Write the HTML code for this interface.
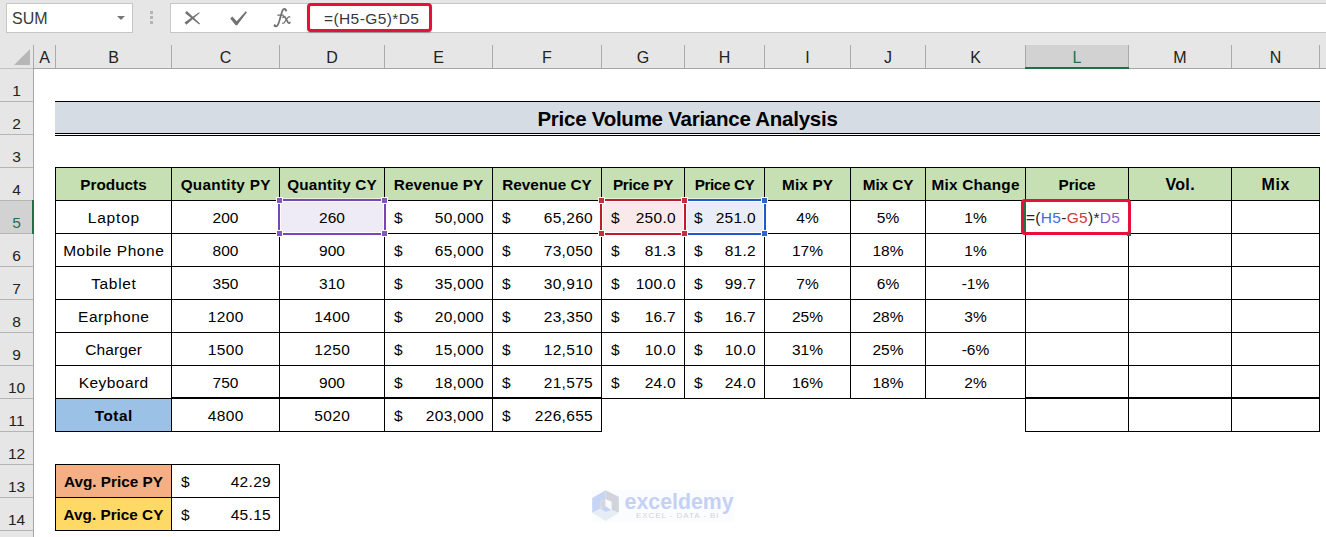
<!DOCTYPE html>
<html><head><meta charset="utf-8"><title>Excel</title>
<style>
html,body{margin:0;padding:0;}
body{width:1326px;height:537px;overflow:hidden;background:#fff;position:relative;font-family:"Liberation Sans",sans-serif;color:#000;}
.abs{position:absolute;}
.top{left:0;top:0;width:1326px;height:69px;background:#e6e6e6;}
.box{position:absolute;background:#fff;border:1px solid #c6c6c6;box-sizing:border-box;}
.ch{position:absolute;top:47px;height:21px;line-height:21px;text-align:center;font-size:16px;color:#222;}
.rh{position:absolute;left:0;width:33px;text-align:center;font-size:15.5px;color:#222;height:33px;line-height:33px;}
.vl{position:absolute;width:1px;background:#000;}
.hl{position:absolute;height:1px;background:#000;}
.c{position:absolute;height:33px;line-height:33px;font-size:15.5px;white-space:nowrap;text-align:center;}
.b{font-weight:bold;font-size:15.3px;letter-spacing:0.2px;}
.t{letter-spacing:0.35px;}
.r{text-align:right;letter-spacing:0.3px;}
.l{text-align:left;}
</style></head><body>

<div class="abs top"></div>
<div class="box" style="left:6px;top:3px;width:127px;height:30px;"></div>
<div class="abs" style="left:12px;top:3px;height:31px;line-height:31px;font-size:16px;color:#3a3a3a;">SUM</div>
<div class="abs" style="left:116.5px;top:16px;width:0;height:0;border-left:4px solid transparent;border-right:4px solid transparent;border-top:4px solid #777;"></div>
<div class="abs" style="left:150px;top:11px;width:3px;height:3px;background:#b4b4b4;"></div>
<div class="abs" style="left:150px;top:16px;width:3px;height:3px;background:#b4b4b4;"></div>
<div class="abs" style="left:150px;top:21px;width:3px;height:3px;background:#b4b4b4;"></div>
<div class="box" style="left:170px;top:3px;width:138px;height:30px;"></div>
<div class="box" style="left:307px;top:3px;width:1030px;height:30px;border-left:none;"></div>
<svg class="abs" style="left:170px;top:0px;" width="137" height="34" viewBox="170 0 137 34">
<polygon points="184.98,13.05 186.82,10.95 200.0,23.55 199.2,24.45" fill="#727272"/>
<polygon points="186.32,24.78 184.48,22.42 199.09,12.31 199.71,13.09" fill="#727272"/>
<polygon points="230.2,18.5 232.3,16.5 236.7,21.2 245.7,11.2 247.0,12.2 237.1,25.2 235.7,25.2" fill="#727272"/>
</svg>
<svg class="abs" style="left:270px;top:4px;" width="26" height="28" viewBox="270 4 26 28" fill="none" stroke="#6e6e6e" stroke-linecap="round" stroke-linejoin="round">
<path d="M286.0 10.5 C285.8 9.2 285 8.8 284.4 8.9 C283.3 9.1 282.7 9.9 282.3 11.1 L280.8 15.8 L279.2 21.4 C278.8 23 278.4 24.4 277.6 25.2 C277 26.1 276.3 26.5 275.7 26.4 C275 26.3 274.6 25.9 274.6 25.4" stroke-width="1.7"/>
<circle cx="285.9" cy="10.4" r="0.6" stroke-width="1"/>
<circle cx="274.8" cy="25.3" r="0.6" stroke-width="1"/>
<path d="M277.9 15.2 L283.4 15.2" stroke-width="1.2"/>
<path d="M283.0 17.4 C283.5 16.4 284.5 16.2 285.0 17.1 L288.0 22.5 C288.5 23.5 289.5 23.4 290.0 22.4" stroke-width="1.6"/>
<path d="M289.9 17.1 C289.3 16.4 288.6 16.6 288 17.4 L284.4 22.4 C283.8 23.2 283.2 23.5 282.6 23.0" stroke-width="1.1"/>
</svg>
<div class="abs" style="left:307px;top:2.5px;width:125px;height:29.5px;box-sizing:border-box;border:3px solid #e6103c;border-radius:4px;background:#fff;box-shadow:0 1px 1px rgba(0,0,0,0.25);"></div>
<div class="abs" style="left:324px;top:4px;height:30px;line-height:30px;font-size:15.5px;color:#383838;letter-spacing:0.4px;">=(H5-G5)*D5</div>
<div class="abs" style="left:1025px;top:45px;width:104px;height:23px;background:#d2d2d2;"></div>
<div class="ch" style="left:34px;width:21px;color:#222;">A</div>
<div class="ch" style="left:56px;width:115px;color:#222;">B</div>
<div class="ch" style="left:172px;width:107px;color:#222;">C</div>
<div class="ch" style="left:280px;width:104px;color:#222;">D</div>
<div class="ch" style="left:385px;width:107px;color:#222;">E</div>
<div class="ch" style="left:493px;width:108px;color:#222;">F</div>
<div class="ch" style="left:602px;width:82px;color:#222;">G</div>
<div class="ch" style="left:685px;width:79px;color:#222;">H</div>
<div class="ch" style="left:765px;width:85px;color:#222;">I</div>
<div class="ch" style="left:851px;width:74px;color:#222;">J</div>
<div class="ch" style="left:926px;width:99px;color:#222;">K</div>
<div class="ch" style="left:1026px;width:102px;color:#217346;">L</div>
<div class="ch" style="left:1129px;width:102px;color:#222;">M</div>
<div class="ch" style="left:1232px;width:87px;color:#222;">N</div>
<div class="vl" style="left:33px;top:45px;height:23px;background:#ababab;"></div>
<div class="vl" style="left:55px;top:45px;height:23px;background:#ababab;"></div>
<div class="vl" style="left:171px;top:45px;height:23px;background:#ababab;"></div>
<div class="vl" style="left:279px;top:45px;height:23px;background:#ababab;"></div>
<div class="vl" style="left:384px;top:45px;height:23px;background:#ababab;"></div>
<div class="vl" style="left:492px;top:45px;height:23px;background:#ababab;"></div>
<div class="vl" style="left:601px;top:45px;height:23px;background:#ababab;"></div>
<div class="vl" style="left:684px;top:45px;height:23px;background:#ababab;"></div>
<div class="vl" style="left:764px;top:45px;height:23px;background:#ababab;"></div>
<div class="vl" style="left:850px;top:45px;height:23px;background:#ababab;"></div>
<div class="vl" style="left:925px;top:45px;height:23px;background:#ababab;"></div>
<div class="vl" style="left:1025px;top:45px;height:23px;background:#ababab;"></div>
<div class="vl" style="left:1128px;top:45px;height:23px;background:#ababab;"></div>
<div class="vl" style="left:1231px;top:45px;height:23px;background:#ababab;"></div>
<div class="vl" style="left:1319px;top:45px;height:23px;background:#ababab;"></div>
<div class="hl" style="left:0;top:68px;width:1326px;background:#a6a6a6;"></div>
<div class="hl" style="left:0;top:68px;width:33px;background:#c2c2c2;"></div>
<div class="abs" style="left:1025px;top:67px;width:104px;height:2px;background:#1e7145;"></div>
<svg class="abs" style="left:14px;top:49px;" width="17" height="17" viewBox="0 0 17 17"><path d="M16 0 L16 16 L0 16 Z" fill="#b7b7b7"/></svg>
<div class="abs" style="left:0;top:69px;width:33px;height:468px;background:#e6e6e6;"></div>
<div class="abs" style="left:0;top:201px;width:33px;height:32px;background:#d2d2d2;"></div>
<div class="rh" style="top:74px;color:#222;">1</div>
<div class="hl" style="left:0;top:101px;width:33px;background:#b5b5b5;"></div>
<div class="rh" style="top:107px;color:#222;">2</div>
<div class="hl" style="left:0;top:134px;width:33px;background:#b5b5b5;"></div>
<div class="rh" style="top:140px;color:#222;">3</div>
<div class="hl" style="left:0;top:167px;width:33px;background:#b5b5b5;"></div>
<div class="rh" style="top:173px;color:#222;">4</div>
<div class="hl" style="left:0;top:200px;width:33px;background:#b5b5b5;"></div>
<div class="rh" style="top:206px;color:#217346;">5</div>
<div class="hl" style="left:0;top:233px;width:33px;background:#b5b5b5;"></div>
<div class="rh" style="top:239px;color:#222;">6</div>
<div class="hl" style="left:0;top:266px;width:33px;background:#b5b5b5;"></div>
<div class="rh" style="top:272px;color:#222;">7</div>
<div class="hl" style="left:0;top:299px;width:33px;background:#b5b5b5;"></div>
<div class="rh" style="top:305px;color:#222;">8</div>
<div class="hl" style="left:0;top:332px;width:33px;background:#b5b5b5;"></div>
<div class="rh" style="top:338px;color:#222;">9</div>
<div class="hl" style="left:0;top:365px;width:33px;background:#b5b5b5;"></div>
<div class="rh" style="top:371px;color:#222;">10</div>
<div class="hl" style="left:0;top:398px;width:33px;background:#b5b5b5;"></div>
<div class="rh" style="top:404px;color:#222;">11</div>
<div class="hl" style="left:0;top:431px;width:33px;background:#b5b5b5;"></div>
<div class="rh" style="top:437px;color:#222;">12</div>
<div class="hl" style="left:0;top:464px;width:33px;background:#b5b5b5;"></div>
<div class="rh" style="top:470px;color:#222;">13</div>
<div class="hl" style="left:0;top:497px;width:33px;background:#b5b5b5;"></div>
<div class="rh" style="top:503px;color:#222;">14</div>
<div class="hl" style="left:0;top:530px;width:33px;background:#b5b5b5;"></div>
<div class="rh" style="top:536px;color:#222;">15</div>
<div class="hl" style="left:0;top:563px;width:33px;background:#b5b5b5;"></div>
<div class="vl" style="left:33px;top:69px;height:468px;background:#a6a6a6;"></div>
<div class="abs" style="left:32px;top:200px;width:2px;height:34px;background:#1e7145;"></div>
<div class="abs" style="left:55px;top:101px;width:1264px;height:33px;background:#d6dce4;"></div>
<div class="abs" style="left:1319px;top:101px;width:1px;height:33px;background:#d6dce4;"></div>
<div class="abs" style="left:55px;top:167px;width:1264px;height:33px;background:#c6e0b4;"></div>
<div class="abs" style="left:55px;top:398px;width:116px;height:33px;background:#9bc2e6;"></div>
<div class="abs" style="left:55px;top:464px;width:116px;height:33px;background:#f4b084;"></div>
<div class="abs" style="left:55px;top:497px;width:116px;height:33px;background:#ffd966;"></div>
<div class="hl" style="left:55px;top:101px;width:1265px;height:1px;"></div>
<div class="hl" style="left:55px;top:133px;width:1265px;height:1px;"></div>
<div class="hl" style="left:55px;top:135px;width:1265px;height:1px;"></div>
<div class="hl" style="left:55px;top:167px;width:1265px;height:1px;"></div>
<div class="hl" style="left:55px;top:200px;width:1265px;height:1px;"></div>
<div class="hl" style="left:55px;top:233px;width:1265px;height:1px;"></div>
<div class="hl" style="left:55px;top:266px;width:1265px;height:1px;"></div>
<div class="hl" style="left:55px;top:299px;width:1265px;height:1px;"></div>
<div class="hl" style="left:55px;top:332px;width:1265px;height:1px;"></div>
<div class="hl" style="left:55px;top:365px;width:1265px;height:1px;"></div>
<div class="hl" style="left:55px;top:398px;width:117px;height:1px;"></div>
<div class="hl" style="left:171px;top:397px;width:431px;height:2px;"></div>
<div class="hl" style="left:601px;top:398px;width:425px;height:1px;"></div>
<div class="hl" style="left:1025px;top:397px;width:295px;height:2px;"></div>
<div class="hl" style="left:55px;top:431px;width:547px;height:1px;"></div>
<div class="hl" style="left:1025px;top:431px;width:295px;height:1px;"></div>
<div class="vl" style="left:55px;top:167px;height:232px;"></div>
<div class="vl" style="left:171px;top:167px;height:232px;"></div>
<div class="vl" style="left:279px;top:167px;height:232px;"></div>
<div class="vl" style="left:384px;top:167px;height:232px;"></div>
<div class="vl" style="left:492px;top:167px;height:232px;"></div>
<div class="vl" style="left:601px;top:167px;height:232px;"></div>
<div class="vl" style="left:684px;top:167px;height:232px;"></div>
<div class="vl" style="left:764px;top:167px;height:232px;"></div>
<div class="vl" style="left:850px;top:167px;height:232px;"></div>
<div class="vl" style="left:925px;top:167px;height:232px;"></div>
<div class="vl" style="left:1025px;top:167px;height:232px;"></div>
<div class="vl" style="left:1128px;top:167px;height:232px;"></div>
<div class="vl" style="left:1231px;top:167px;height:232px;"></div>
<div class="vl" style="left:1319px;top:167px;height:232px;"></div>
<div class="vl" style="left:55px;top:398px;height:34px;"></div>
<div class="vl" style="left:171px;top:398px;height:34px;"></div>
<div class="vl" style="left:279px;top:398px;height:34px;"></div>
<div class="vl" style="left:384px;top:398px;height:34px;"></div>
<div class="vl" style="left:492px;top:398px;height:34px;"></div>
<div class="vl" style="left:601px;top:398px;height:34px;"></div>
<div class="vl" style="left:1025px;top:398px;height:34px;"></div>
<div class="vl" style="left:1128px;top:398px;height:34px;"></div>
<div class="vl" style="left:1231px;top:398px;height:34px;"></div>
<div class="vl" style="left:1319px;top:398px;height:34px;"></div>
<div class="hl" style="left:55px;top:464px;width:225px;height:1px;"></div>
<div class="hl" style="left:55px;top:497px;width:225px;height:1px;"></div>
<div class="hl" style="left:55px;top:530px;width:225px;height:1px;"></div>
<div class="vl" style="left:55px;top:464px;height:67px;"></div>
<div class="vl" style="left:171px;top:464px;height:67px;"></div>
<div class="vl" style="left:279px;top:464px;height:67px;"></div>
<div class="abs" style="left:277px;top:198px;width:110px;height:38px;background:rgba(255,255,255,0.55);"></div>
<div class="abs" style="left:278px;top:199px;width:108px;height:36px;box-sizing:border-box;border:2px solid #7a46b6;background:#fff;"></div>
<div class="abs" style="left:281px;top:202px;width:102px;height:30px;background:#eeeaf6;"></div>
<div class="abs" style="left:276px;top:197px;width:7px;height:7px;background:#fff;"></div>
<div class="abs" style="left:277px;top:198px;width:5px;height:5px;background:#8258be;"></div>
<div class="abs" style="left:381px;top:197px;width:7px;height:7px;background:#fff;"></div>
<div class="abs" style="left:382px;top:198px;width:5px;height:5px;background:#8258be;"></div>
<div class="abs" style="left:276px;top:230px;width:7px;height:7px;background:#fff;"></div>
<div class="abs" style="left:277px;top:231px;width:5px;height:5px;background:#8258be;"></div>
<div class="abs" style="left:381px;top:230px;width:7px;height:7px;background:#fff;"></div>
<div class="abs" style="left:382px;top:231px;width:5px;height:5px;background:#8258be;"></div>
<div class="abs" style="left:682px;top:198px;width:85px;height:38px;background:rgba(255,255,255,0.55);"></div>
<div class="abs" style="left:683px;top:199px;width:83px;height:36px;box-sizing:border-box;border:2px solid #1f5ac6;background:#fff;"></div>
<div class="abs" style="left:686px;top:202px;width:77px;height:30px;background:#e9edf8;"></div>
<div class="abs" style="left:681px;top:197px;width:7px;height:7px;background:#fff;"></div>
<div class="abs" style="left:682px;top:198px;width:5px;height:5px;background:#2f66cc;"></div>
<div class="abs" style="left:761px;top:197px;width:7px;height:7px;background:#fff;"></div>
<div class="abs" style="left:762px;top:198px;width:5px;height:5px;background:#2f66cc;"></div>
<div class="abs" style="left:681px;top:230px;width:7px;height:7px;background:#fff;"></div>
<div class="abs" style="left:682px;top:231px;width:5px;height:5px;background:#2f66cc;"></div>
<div class="abs" style="left:761px;top:230px;width:7px;height:7px;background:#fff;"></div>
<div class="abs" style="left:762px;top:231px;width:5px;height:5px;background:#2f66cc;"></div>
<div class="abs" style="left:599px;top:198px;width:88px;height:38px;background:rgba(255,255,255,0.55);"></div>
<div class="abs" style="left:600px;top:199px;width:86px;height:36px;box-sizing:border-box;border:2px solid #be1b2c;background:#fff;"></div>
<div class="abs" style="left:603px;top:202px;width:80px;height:30px;background:#f9e9ea;"></div>
<div class="abs" style="left:598px;top:197px;width:7px;height:7px;background:#fff;"></div>
<div class="abs" style="left:599px;top:198px;width:5px;height:5px;background:#c4303a;"></div>
<div class="abs" style="left:681px;top:197px;width:7px;height:7px;background:#fff;"></div>
<div class="abs" style="left:682px;top:198px;width:5px;height:5px;background:#c4303a;"></div>
<div class="abs" style="left:598px;top:230px;width:7px;height:7px;background:#fff;"></div>
<div class="abs" style="left:599px;top:231px;width:5px;height:5px;background:#c4303a;"></div>
<div class="abs" style="left:681px;top:230px;width:7px;height:7px;background:#fff;"></div>
<div class="abs" style="left:682px;top:231px;width:5px;height:5px;background:#c4303a;"></div>
<div class="c b" style="left:56px;top:102px;width:1263px;font-size:20.5px;letter-spacing:-0.25px;">Price Volume Variance Analysis</div>
<div class="c b" style="left:56px;top:168px;width:115px;letter-spacing:0.03px;padding-left:0.03px;box-sizing:border-box;">Products</div>
<div class="c b" style="left:172px;top:168px;width:107px;letter-spacing:0.3px;padding-left:0.3px;box-sizing:border-box;">Quantity PY</div>
<div class="c b" style="left:280px;top:168px;width:104px;letter-spacing:0.2px;padding-left:0.2px;box-sizing:border-box;">Quantity CY</div>
<div class="c b" style="left:385px;top:168px;width:107px;letter-spacing:0.12px;padding-left:0.12px;box-sizing:border-box;">Revenue PY</div>
<div class="c b" style="left:493px;top:168px;width:108px;letter-spacing:0.04px;padding-left:0.04px;box-sizing:border-box;">Revenue CY</div>
<div class="c b" style="left:602px;top:168px;width:82px;letter-spacing:-0.23px;padding-left:-0.23px;box-sizing:border-box;">Price PY</div>
<div class="c b" style="left:685px;top:168px;width:79px;letter-spacing:-0.4px;padding-left:-0.4px;box-sizing:border-box;">Price CY</div>
<div class="c b" style="left:765px;top:168px;width:85px;letter-spacing:0.16px;padding-left:0.16px;box-sizing:border-box;">Mix PY</div>
<div class="c b" style="left:851px;top:168px;width:74px;letter-spacing:-0.08px;padding-left:-0.08px;box-sizing:border-box;">Mix CY</div>
<div class="c b" style="left:926px;top:168px;width:99px;letter-spacing:0.23px;padding-left:0.23px;box-sizing:border-box;">Mix Change</div>
<div class="c b" style="left:1026px;top:168px;width:102px;letter-spacing:-0.1px;padding-left:-0.1px;box-sizing:border-box;">Price</div>
<div class="c b" style="left:1129px;top:168px;width:102px;font-size:16px;letter-spacing:0.35px;padding-left:0.35px;box-sizing:border-box;">Vol.</div>
<div class="c b" style="left:1232px;top:168px;width:87px;font-size:16px;letter-spacing:0.65px;padding-left:0.65px;box-sizing:border-box;">Mix</div>
<div class="c t" style="left:56px;top:201px;width:115px;letter-spacing:0.8px;padding-left:0.8px;box-sizing:border-box;">Laptop</div>
<div class="c " style="left:172px;top:201px;width:107px;">200</div>
<div class="c " style="left:280px;top:201px;width:104px;">260</div>
<div class="c l " style="left:394px;top:201px;">$</div>
<div class="c r " style="left:385px;top:201px;width:99px;">50,000</div>
<div class="c l " style="left:502px;top:201px;">$</div>
<div class="c r " style="left:493px;top:201px;width:100px;">65,260</div>
<div class="c l " style="left:611px;top:201px;">$</div>
<div class="c r " style="left:602px;top:201px;width:74px;">250.0</div>
<div class="c l " style="left:694px;top:201px;">$</div>
<div class="c r " style="left:685px;top:201px;width:71px;">251.0</div>
<div class="c " style="left:765px;top:201px;width:85px;">4%</div>
<div class="c " style="left:851px;top:201px;width:74px;">5%</div>
<div class="c " style="left:926px;top:201px;width:99px;">1%</div>
<div class="c t" style="left:56px;top:234px;width:115px;letter-spacing:0.53px;padding-left:0.53px;box-sizing:border-box;">Mobile Phone</div>
<div class="c " style="left:172px;top:234px;width:107px;">800</div>
<div class="c " style="left:280px;top:234px;width:104px;">900</div>
<div class="c l " style="left:394px;top:234px;">$</div>
<div class="c r " style="left:385px;top:234px;width:99px;">65,000</div>
<div class="c l " style="left:502px;top:234px;">$</div>
<div class="c r " style="left:493px;top:234px;width:100px;">73,050</div>
<div class="c l " style="left:611px;top:234px;">$</div>
<div class="c r " style="left:602px;top:234px;width:74px;">81.3</div>
<div class="c l " style="left:694px;top:234px;">$</div>
<div class="c r " style="left:685px;top:234px;width:71px;">81.2</div>
<div class="c " style="left:765px;top:234px;width:85px;">17%</div>
<div class="c " style="left:851px;top:234px;width:74px;">18%</div>
<div class="c " style="left:926px;top:234px;width:99px;">1%</div>
<div class="c t" style="left:56px;top:267px;width:115px;letter-spacing:0.65px;padding-left:0.65px;box-sizing:border-box;">Tablet</div>
<div class="c " style="left:172px;top:267px;width:107px;">350</div>
<div class="c " style="left:280px;top:267px;width:104px;">310</div>
<div class="c l " style="left:394px;top:267px;">$</div>
<div class="c r " style="left:385px;top:267px;width:99px;">35,000</div>
<div class="c l " style="left:502px;top:267px;">$</div>
<div class="c r " style="left:493px;top:267px;width:100px;">30,910</div>
<div class="c l " style="left:611px;top:267px;">$</div>
<div class="c r " style="left:602px;top:267px;width:74px;">100.0</div>
<div class="c l " style="left:694px;top:267px;">$</div>
<div class="c r " style="left:685px;top:267px;width:71px;">99.7</div>
<div class="c " style="left:765px;top:267px;width:85px;">7%</div>
<div class="c " style="left:851px;top:267px;width:74px;">6%</div>
<div class="c " style="left:926px;top:267px;width:99px;">-1%</div>
<div class="c t" style="left:56px;top:300px;width:115px;letter-spacing:0.52px;padding-left:0.52px;box-sizing:border-box;">Earphone</div>
<div class="c " style="left:172px;top:300px;width:107px;letter-spacing:0.4px;padding-left:0.4px;box-sizing:border-box;">1200</div>
<div class="c " style="left:280px;top:300px;width:104px;letter-spacing:0.4px;padding-left:0.4px;box-sizing:border-box;">1400</div>
<div class="c l " style="left:394px;top:300px;">$</div>
<div class="c r " style="left:385px;top:300px;width:99px;">20,000</div>
<div class="c l " style="left:502px;top:300px;">$</div>
<div class="c r " style="left:493px;top:300px;width:100px;">23,350</div>
<div class="c l " style="left:611px;top:300px;">$</div>
<div class="c r " style="left:602px;top:300px;width:74px;">16.7</div>
<div class="c l " style="left:694px;top:300px;">$</div>
<div class="c r " style="left:685px;top:300px;width:71px;">16.7</div>
<div class="c " style="left:765px;top:300px;width:85px;">25%</div>
<div class="c " style="left:851px;top:300px;width:74px;">28%</div>
<div class="c " style="left:926px;top:300px;width:99px;">3%</div>
<div class="c t" style="left:56px;top:333px;width:115px;letter-spacing:0.12px;padding-left:0.12px;box-sizing:border-box;">Charger</div>
<div class="c " style="left:172px;top:333px;width:107px;letter-spacing:0.4px;padding-left:0.4px;box-sizing:border-box;">1500</div>
<div class="c " style="left:280px;top:333px;width:104px;letter-spacing:0.4px;padding-left:0.4px;box-sizing:border-box;">1250</div>
<div class="c l " style="left:394px;top:333px;">$</div>
<div class="c r " style="left:385px;top:333px;width:99px;">15,000</div>
<div class="c l " style="left:502px;top:333px;">$</div>
<div class="c r " style="left:493px;top:333px;width:100px;">12,510</div>
<div class="c l " style="left:611px;top:333px;">$</div>
<div class="c r " style="left:602px;top:333px;width:74px;">10.0</div>
<div class="c l " style="left:694px;top:333px;">$</div>
<div class="c r " style="left:685px;top:333px;width:71px;">10.0</div>
<div class="c " style="left:765px;top:333px;width:85px;">31%</div>
<div class="c " style="left:851px;top:333px;width:74px;">25%</div>
<div class="c " style="left:926px;top:333px;width:99px;">-6%</div>
<div class="c t" style="left:56px;top:366px;width:115px;letter-spacing:0.45px;padding-left:0.45px;box-sizing:border-box;">Keyboard</div>
<div class="c " style="left:172px;top:366px;width:107px;">750</div>
<div class="c " style="left:280px;top:366px;width:104px;">900</div>
<div class="c l " style="left:394px;top:366px;">$</div>
<div class="c r " style="left:385px;top:366px;width:99px;">18,000</div>
<div class="c l " style="left:502px;top:366px;">$</div>
<div class="c r " style="left:493px;top:366px;width:100px;">21,575</div>
<div class="c l " style="left:611px;top:366px;">$</div>
<div class="c r " style="left:602px;top:366px;width:74px;">24.0</div>
<div class="c l " style="left:694px;top:366px;">$</div>
<div class="c r " style="left:685px;top:366px;width:71px;">24.0</div>
<div class="c " style="left:765px;top:366px;width:85px;">16%</div>
<div class="c " style="left:851px;top:366px;width:74px;">18%</div>
<div class="c " style="left:926px;top:366px;width:99px;">2%</div>
<div class="c b" style="left:56px;top:399px;width:115px;letter-spacing:0.55px;padding-left:0.55px;box-sizing:border-box;">Total</div>
<div class="c " style="left:172px;top:399px;width:107px;letter-spacing:0.4px;padding-left:0.4px;box-sizing:border-box;">4800</div>
<div class="c " style="left:280px;top:399px;width:104px;letter-spacing:0.4px;padding-left:0.4px;box-sizing:border-box;">5020</div>
<div class="c l " style="left:394px;top:399px;">$</div>
<div class="c r " style="left:385px;top:399px;width:99px;">203,000</div>
<div class="c l " style="left:502px;top:399px;">$</div>
<div class="c r " style="left:493px;top:399px;width:100px;">226,655</div>
<div class="c b" style="left:56px;top:465px;width:115px;letter-spacing:0;">Avg. Price PY</div>
<div class="c l " style="left:181px;top:465px;">$</div>
<div class="c r " style="left:172px;top:465px;width:99px;">42.29</div>
<div class="c b" style="left:56px;top:498px;width:115px;letter-spacing:0;">Avg. Price CY</div>
<div class="c l " style="left:181px;top:498px;">$</div>
<div class="c r " style="left:172px;top:498px;width:99px;">45.15</div>
<div class="abs" style="left:1024px;top:199px;width:106px;height:36px;box-sizing:border-box;border:2px solid #217346;background:#fff;"></div>
<div class="abs" style="left:1127px;top:232px;width:4px;height:4px;background:#217346;"></div>
<div class="abs" style="left:1021px;top:199px;width:110px;height:36px;box-sizing:border-box;border:3px solid #e6103c;border-radius:4px;"></div>
<div class="c l" style="left:1026px;top:201px;color:#222;letter-spacing:0.3px;">=(<span style="color:#3b6fd4">H5</span>-<span style="color:#c9403a">G5</span>)*<span style="color:#8a5cc8">D5</span></div>
<svg class="abs" style="left:580px;top:480px;" width="170" height="50" viewBox="0 0 170 50">
<rect x="12" y="10" width="142" height="32" fill="#fbfcfe"/>
<polygon points="25.6,10.3 12.2,17.9 12.2,32.7 20.5,28.8 20.5,21.2 25.6,19.2" fill="#c6d4f6"/>
<polygon points="25.6,10.3 38.8,16.7 38.8,32.7 31.4,30.1 31.4,21.8 25.6,19.2" fill="#d1d4da"/>
<polygon points="12.2,32.7 20.5,28.8 25.6,32.1 31.4,30.1 38.8,32.7 25.6,41.0" fill="#e7edf5"/>
<polygon points="20.5,21.2 25.6,19.2 25.6,26.3 20.5,28.8" fill="#d3d6dc"/>
<polygon points="25.6,19.2 31.4,21.8 31.4,30.1 25.6,26.3" fill="#f8fafd"/>
<polygon points="20.5,28.8 25.6,26.3 31.4,30.1 25.6,32.1" fill="#c6d4f6"/>
<text x="44.6" y="28.9" font-family="Liberation Sans, sans-serif" font-weight="bold" font-size="22" fill="#c4d1f5" textLength="109" lengthAdjust="spacingAndGlyphs">exceldemy</text>
<text x="56" y="37.9" font-family="Liberation Sans, sans-serif" font-size="8" fill="#d3d4d9" textLength="82.5" lengthAdjust="spacing">EXCEL - DATA - BI</text>
</svg>
</body></html>
